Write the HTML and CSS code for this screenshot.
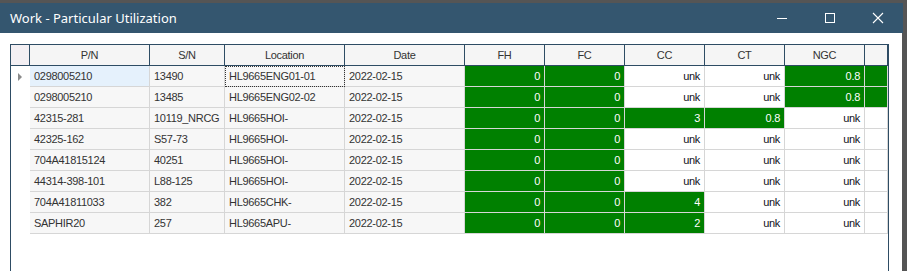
FILE: index.html
```html
<!DOCTYPE html>
<html lang="en">
<head>
  <meta charset="UTF-8">
  <title>Work - Particular Utilization</title>
  <link rel="stylesheet" href="styles.css">
</head>
<body>

  <div class="window">
    <div class="titlebar">
      <span class="title">Work - Particular Utilization</span>
      <div class="controls">
        <span class="ctl">
          <svg width="12" height="12" viewBox="0 0 12 12"><path d="M1 6.5h10" stroke="#fff" stroke-width="1"/></svg>
        </span>
        <span class="ctl">
          <svg width="12" height="12" viewBox="0 0 12 12"><rect x="1.5" y="1.5" width="9" height="9" fill="none" stroke="#fff" stroke-width="1"/></svg>
        </span>
        <span class="ctl">
          <svg width="12" height="12" viewBox="0 0 12 12"><path d="M1 1L11 11M11 1L1 11" stroke="#fff" stroke-width="1.1"/></svg>
        </span>
      </div>
    </div>

    <div class="content">
      <div class="grid">
        <div class="hd rh"></div>
        <div class="hd">P/N</div>
        <div class="hd">S/N</div>
        <div class="hd">Location</div>
        <div class="hd">Date</div>
        <div class="hd">FH</div>
        <div class="hd">FC</div>
        <div class="hd">CC</div>
        <div class="hd">CT</div>
        <div class="hd">NGC</div>
        <div class="hd"></div>

        <div class="rh"><span class="arrow"></span></div>
        <div class="c sel">0298005210</div>
        <div class="c">13490</div>
        <div class="c focus">HL9665ENG01-01</div>
        <div class="c">2022-02-15</div>
        <div class="n ok">0</div>
        <div class="n ok">0</div>
        <div class="n">unk</div>
        <div class="n">unk</div>
        <div class="n ok">0.8</div>
        <div class="n ok"></div>

        <div class="rh"></div>
        <div class="c">0298005210</div>
        <div class="c">13485</div>
        <div class="c">HL9665ENG02-02</div>
        <div class="c">2022-02-15</div>
        <div class="n ok">0</div>
        <div class="n ok">0</div>
        <div class="n">unk</div>
        <div class="n">unk</div>
        <div class="n ok">0.8</div>
        <div class="n ok"></div>

        <div class="rh"></div>
        <div class="c">42315-281</div>
        <div class="c">10119_NRCG</div>
        <div class="c">HL9665HOI-</div>
        <div class="c">2022-02-15</div>
        <div class="n ok">0</div>
        <div class="n ok">0</div>
        <div class="n ok">3</div>
        <div class="n ok">0.8</div>
        <div class="n">unk</div>
        <div class="n"></div>

        <div class="rh"></div>
        <div class="c">42325-162</div>
        <div class="c">S57-73</div>
        <div class="c">HL9665HOI-</div>
        <div class="c">2022-02-15</div>
        <div class="n ok">0</div>
        <div class="n ok">0</div>
        <div class="n">unk</div>
        <div class="n">unk</div>
        <div class="n">unk</div>
        <div class="n"></div>

        <div class="rh"></div>
        <div class="c">704A41815124</div>
        <div class="c">40251</div>
        <div class="c">HL9665HOI-</div>
        <div class="c">2022-02-15</div>
        <div class="n ok">0</div>
        <div class="n ok">0</div>
        <div class="n">unk</div>
        <div class="n">unk</div>
        <div class="n">unk</div>
        <div class="n"></div>

        <div class="rh"></div>
        <div class="c">44314-398-101</div>
        <div class="c">L88-125</div>
        <div class="c">HL9665HOI-</div>
        <div class="c">2022-02-15</div>
        <div class="n ok">0</div>
        <div class="n ok">0</div>
        <div class="n">unk</div>
        <div class="n">unk</div>
        <div class="n">unk</div>
        <div class="n"></div>

        <div class="rh"></div>
        <div class="c">704A41811033</div>
        <div class="c">382</div>
        <div class="c">HL9665CHK-</div>
        <div class="c">2022-02-15</div>
        <div class="n ok">0</div>
        <div class="n ok">0</div>
        <div class="n ok">4</div>
        <div class="n">unk</div>
        <div class="n">unk</div>
        <div class="n"></div>

        <div class="rh"></div>
        <div class="c">SAPHIR20</div>
        <div class="c">257</div>
        <div class="c">HL9665APU-</div>
        <div class="c">2022-02-15</div>
        <div class="n ok">0</div>
        <div class="n ok">0</div>
        <div class="n ok">2</div>
        <div class="n">unk</div>
        <div class="n">unk</div>
        <div class="n"></div>
      </div>
    </div>
  </div>

</body>
</html>
```

FILE: styles.css
```css
* {
  box-sizing: border-box;
}

body {
  margin: 0;
  height: 271px;
  overflow: hidden;
  background-color: #555;
}

.window {
  width: 902px;
  margin-top: 3px;
  background-color: #fff;
  height: 268px;
}

.titlebar {
  height: 30px;
  background-color: #34566f;
  display: flex;
  align-items: center;
  justify-content: space-between;
  padding-left: 10px;
  width: 903px;
}

.title {
  color: #fff;
  font-family: 'Noto Sans', sans-serif;
  font-size: 13px;
}

.controls {
  display: flex;
  height: 100%;
  padding-right: 1px;
}

.ctl {
  width: 48px;
  display: flex;
  align-items: center;
  justify-content: center;
}

.content {
  padding: 11px 0 0 10px;
}

.grid {
  width: 879px;
  height: 230px;
  border: 1px solid #2e4c64;
  border-bottom: none;
  display: grid;
  grid-template-columns: 19px 120px 75px 120px 120px 80px 80px 80px 80px 80px 23px;
  grid-auto-rows: 21px;
  align-content: start;
  font-family: 'Liberation Sans', Arial, sans-serif;
  font-size: 11px;
  letter-spacing: -0.3px;
  color: #333;
}

.grid > div {
  display: flex;
  align-items: center;
  white-space: nowrap;
  overflow: hidden;
}

.hd {
  background-color: #f5f5f5;
  border-right: 1px solid #2e4c64;
  border-bottom: 1px solid #2e4c64;
  justify-content: center;
}

.hd.rh {
  background-color: #f3eff3;
}

.rh {
  background-color: #fff;
  justify-content: center;
}

.arrow {
  width: 0;
  height: 0;
  border-top: 4px solid transparent;
  border-bottom: 4px solid transparent;
  border-left: 4px solid #8a8a8a;
  margin-right: 2px;
}

.c {
  background-color: #f7f7f7;
  border-right: 1px solid #d6d6d6;
  border-bottom: 1px solid #d6d6d6;
  padding-left: 4px;
}

.c.sel {
  background-color: #e5f1fc;
}

.c.focus {
  outline: 1px dotted #333;
  outline-offset: -1px;
}

.n {
  background-color: #fff;
  border-right: 1px solid #d6d6d6;
  border-bottom: 1px solid #d6d6d6;
  justify-content: flex-end;
  padding-right: 4px;
  color: #111120;
}

.n.ok {
  background-color: #008000;
  color: #fff;
}
```
